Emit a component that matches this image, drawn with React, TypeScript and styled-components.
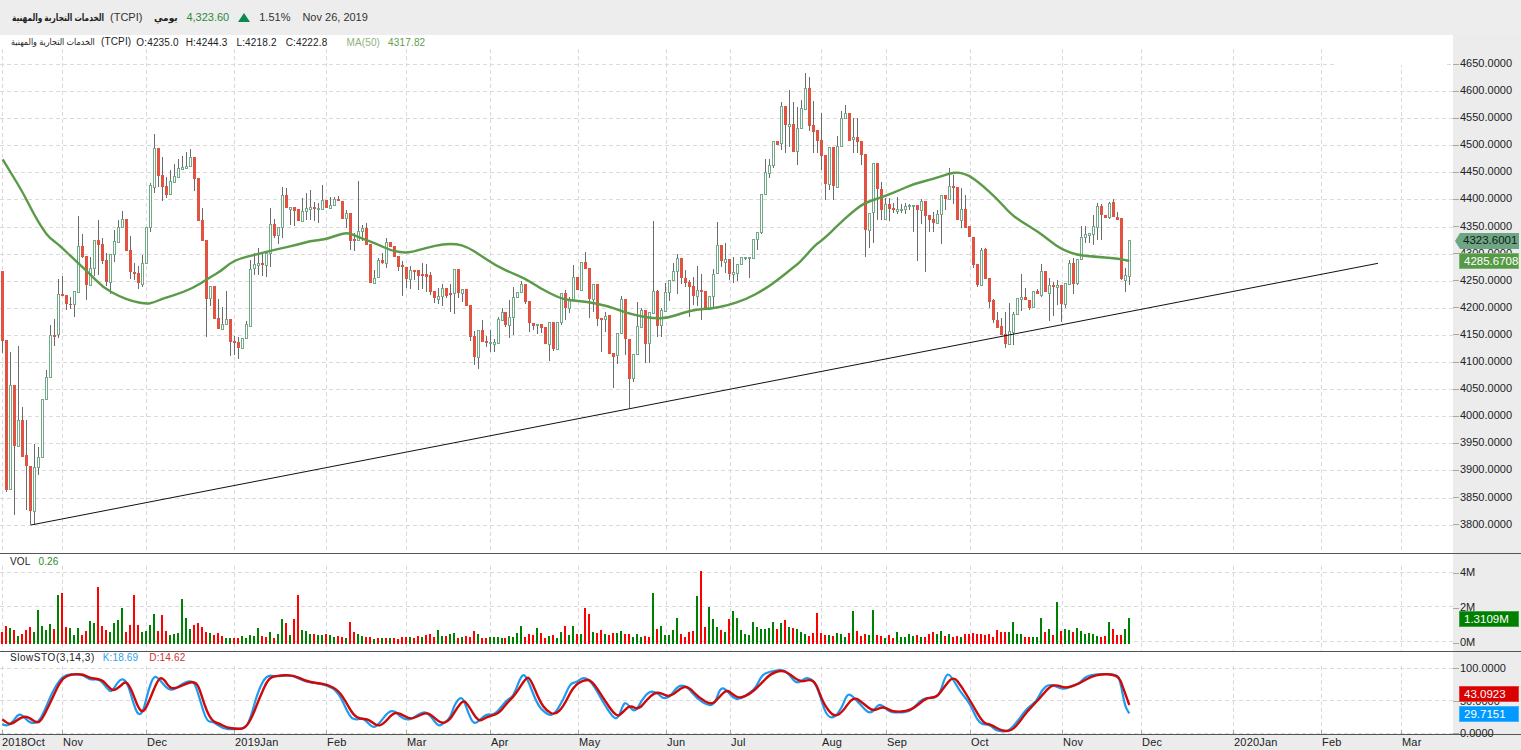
import React from 'react'
import styled, { createGlobalStyle } from 'styled-components'

type Candle = [number, number, number, number, number]

// candle rows: up(1)/down(0), body top, body bottom, wick high, wick low (0 = no wick)
// values were read at 3x, so they get divided on the way in
const candlesA: Candle[] = [
  [0,453,662,0,700],[0,660,1110,0,1115],[1,796,1108,697,0],[0,796,977,0,1185],[1,900,977,678,0],[0,900,1010,862,0],[0,1005,1037,900,1170],[0,1038,1172,0,1215],[1,1042,1172,972,1215],[1,1010,1042,982,1065],
  [1,838,1010,0,0],[1,770,838,750,0],[1,645,770,615,0],[0,645,650,598,678],[1,522,643,477,653],[0,522,527,467,0],[0,525,552,0,570],[0,551,554,530,567],[1,513,553,0,590],[1,378,515,288,0],
  [0,378,410,342,415],[0,407,495,0,540],[1,445,494,410,0],[1,360,445,0,468],[0,360,375,300,465],[0,372,423,353,432],[0,420,485,400,497],[1,403,485,0,523],[1,363,403,330,425],[1,322,365,300,0],
  [1,298,320,273,0],[0,298,392,0,0],[0,390,455,348,478],[0,457,462,430,480],[0,460,490,437,508],[1,430,492,405,500],[1,322,430,0,0],[1,195,322,190,335],[1,85,200,42,220],[0,85,167,0,200],
  [0,165,200,110,242],[0,198,225,170,233],[1,183,222,150,0],[1,168,185,133,0],[1,145,170,118,0],[1,142,148,108,0],[1,137,143,97,0],[1,112,137,87,0],[0,112,177,0,212],[0,175,302,0,0],
  [0,300,362,265,0],[0,360,537,0,650],[1,498,533,0,557],[0,498,597,0,0],[0,595,627,538,0],[1,613,627,560,0],[1,598,613,513,0],[0,598,665,0,707],[0,663,668,648,705],[0,667,683,650,716],
  [1,655,683,0,0],[1,613,653,603,0],[1,447,617,420,0],[1,432,445,400,465],[1,430,434,385,465],[0,430,434,400,468],[1,398,434,0,470],[1,313,400,265,440],[0,313,347,297,355],[1,320,345,0,372],
  [1,226,320,200,353],[0,226,265,203,0],[1,260,268,0,315],[0,260,272,0,318],[0,268,303,0,0],[1,272,302,235,0],[1,265,272,218,300],[1,260,266,210,300],[0,260,266,245,303],[1,265,268,250,308],
  [1,240,268,195,0],[0,240,263,0,0],[1,255,263,232,0],[1,238,255,230,0],[0,238,242,228,0],[0,243,297,0,0],[1,280,293,270,325],[0,280,362,0,390],[0,358,362,340,392],[1,332,360,183,0],
  [1,325,332,315,362],[0,325,375,308,0],[0,373,488,0,0],[1,475,488,450,0],[1,420,472,415,0],[0,420,428,400,432],[1,365,430,355,443],[0,365,380,0,0],[0,378,410,0,0],[0,408,442,0,453],
]

const candlesB: Candle[] = [
  [0,615,622,603,708],[0,622,656,0,685],[1,631,658,618,687],[0,630,635,0,660],[0,630,647,0,690],[0,642,648,610,688],[0,642,651,612,695],[0,645,695,637,705],[0,693,714,0,730],[1,709,716,685,732],
  [1,685,708,672,738],[0,684,708,0,715],[0,700,704,672,757],[1,628,700,0,762],[0,628,698,0,715],[1,688,698,0,727],[0,688,737,0,0],[0,736,830,0,842],[0,828,890,812,915],[1,811,890,0,927],
  [0,811,845,780,0],[0,843,848,828,862],[1,847,849,810,875],[1,847,851,838,875],[1,777,848,770,0],[1,757,780,745,0],[0,757,795,0,800],[1,771,795,720,835],[1,712,772,682,825],[1,697,712,0,0],
  [1,672,697,662,0],[0,672,725,0,732],[0,724,790,0,815],[0,790,797,0,810],[1,793,796,0,823],[0,792,803,0,820],[0,801,851,0,0],[1,787,851,0,903],[0,787,866,0,872],[1,787,866,0,0],
  [1,700,785,0,795],[0,700,743,690,780],[1,720,743,712,760],[1,652,718,615,0],[0,652,690,0,0],[1,606,690,0,0],[0,606,626,577,0],[0,624,716,0,775],[1,673,716,0,757],[0,673,776,0,798],
  [0,775,779,0,875],[1,767,776,755,815],[0,765,882,0,0],[0,880,890,0,985],[1,818,885,0,912],[1,718,818,708,0],[0,717,838,0,885],[0,838,957,0,1045],[1,883,953,0,965],[1,798,883,727,0],
  [1,751,801,745,805],[0,751,852,0,910],[1,757,848,0,908],[1,694,758,483,0],[0,694,797,690,830],[1,751,796,745,830],[1,697,754,670,0],[1,661,697,0,722],[1,634,661,610,0],[1,595,634,582,703],
  [0,595,653,0,673],[0,653,668,630,680],[0,667,680,660,770],[0,677,707,650,735],[1,691,708,618,738],[0,690,695,642,780],[0,693,746,0,0],[1,708,746,0,0],[1,642,708,628,745],[1,556,640,487,0],
  [0,555,602,0,620],[1,598,605,550,640],[0,598,641,0,660],[1,637,641,590,668],[1,613,638,0,662],[1,592,613,0,0],[1,592,594,590,600],[1,592,593,0,654],[1,538,595,0,0],[1,517,538,0,570],
  [1,403,517,0,523],[1,337,403,298,0],[1,316,340,298,353],[1,244,316,0,323],[0,244,255,0,0],[1,138,250,125,270],[0,138,195,0,278],[1,193,197,90,262],[0,193,275,125,0],[1,205,272,142,315],
]

const candlesC: Candle[] = [
  [1,145,205,120,0],[1,85,147,40,0],[0,85,197,52,213],[0,195,215,123,278],[0,210,242,0,278],[0,240,287,160,330],[0,285,371,0,420],[1,262,371,0,390],[0,262,377,0,420],[1,258,380,228,0],
  [1,175,258,152,0],[1,160,175,135,0],[0,160,242,0,0],[1,232,238,175,278],[0,232,245,175,280],[0,243,285,0,315],[0,282,510,0,590],[1,458,510,0,563],[1,310,455,0,548],[0,310,387,0,480],
  [0,388,450,365,480],[1,432,477,415,480],[0,432,447,415,483],[0,445,450,430,460],[1,447,452,412,462],[1,447,449,432,460],[1,438,446,430,462],[1,435,437,432,450],[1,436,438,435,517],[0,436,450,0,602],
  [1,423,450,418,492],[0,423,467,0,635],[0,465,480,0,515],[0,478,489,455,515],[1,462,488,450,0],[1,405,462,0,552],[0,405,417,0,450],[1,378,417,325,0],[0,378,384,345,433],[0,381,480,0,0],
  [1,447,480,385,505],[0,447,503,405,0],[0,498,531,0,0],[0,530,615,0,625],[0,612,676,0,680],[1,570,674,563,0],[0,568,657,565,0],[0,654,726,0,743],[0,720,780,718,790],[0,780,804,757,0],
  [0,797,825,775,0],[0,823,852,755,863],[1,814,852,728,0],[1,762,815,757,855],[1,715,762,0,0],[1,712,717,642,752],[0,711,720,684,0],[0,720,743,0,750],[1,694,740,0,0],[0,693,701,688,0],
  [1,633,704,612,712],[0,633,695,0,0],[1,676,699,655,783],[0,675,681,665,768],[1,675,681,660,735],[0,675,732,0,787],[1,670,731,0,745],[1,610,673,600,0],[0,610,672,595,702],[1,597,668,0,675],
  [1,532,597,498,0],[1,523,532,498,550],[1,520,524,0,550],[1,498,521,465,555],[1,438,500,428,540],[0,438,465,432,540],[0,465,473,0,0],[1,428,472,425,478],[0,426,472,418,0],[0,472,480,455,0],
  [0,474,657,0,660],[1,646,659,625,695],[1,541,647,0,675],
]

// tops of the volume bars at 3x, minus sign = red bar
const volA = [
  -275,-258,264,-270,288,-282,-270,-261,276,210,258,270,252,-267,165,-159,-261,264,285,264,
  -285,-273,243,249,-141,-258,-270,276,249,240,204,-276,-255,-165,-255,275,274,255,222,-273,
  -225,-273,285,282,279,177,234,267,-255,-249,-261,-276,279,-285,-279,-288,294,294,-294,-294,
  288,293,285,288,264,-288,-291,276,-294,282,237,-249,285,-237,-165,270,273,282,-282,285,
  285,-282,285,291,-288,-291,294,-246,-276,282,288,-291,-291,296,-294,294,-294,294,-294,-297,
]
const volB = [
  -261,-261,261,-264,-258,261,-255,-252,-261,240,258,-258,252,249,-264,261,-258,-261,-243,252,
  -264,-264,261,261,261,264,-264,258,261,249,228,-261,-252,-255,234,-249,-264,258,-255,264,
  246,-228,255,228,-252,252,-174,-192,246,-249,-240,252,-255,-249,249,243,-252,-252,261,252,
  261,-258,-261,129,-237,228,255,255,240,204,-252,-261,-246,-243,138,-63,-231,171,207,231,
  -240,246,-207,183,204,240,252,255,216,231,237,237,234,216,-237,219,-210,231,-234,237,
]
const volC = [
  246,252,-258,-249,-189,-249,-255,255,-258,249,252,261,-249,183,-243,-258,-252,255,180,-255,
  -258,264,-255,-264,246,261,261,252,258,-255,261,-261,-252,-246,252,243,-258,252,-261,-258,
  261,-252,-252,-249,-252,-252,-255,-252,-261,-240,-246,-246,246,216,252,252,-261,-261,261,261,
  204,-246,237,-255,156,-243,237,240,-246,234,243,252,249,252,258,-261,-258,216,-237,-255,
  -255,237,204,
]

const maA = [8,118,40,170,70,220,100,280,130,330,150,355,175,373,230,425,270,462,310,503,360,530,400,545,440,552,460,548,490,535,550,517,590,497,610,485,630,472,660,455,690,430,720,415,770,403,810,393,850,383,890,375,930,363,975,358,1000,350,1030,340,1050,340,1085,355,1130,372,1170,390,1200,397]
const maB = [30,578,80,563,130,552,170,552,200,560,240,585,285,615,330,637,375,655,420,685,480,715,510,721,560,725,620,737,660,752,710,767,760,775,800,775,850,758,890,748,930,746,980,737,1040,717,1090,690,1140,655,1180,622,1200,607]
const maC = [165,555,190,538,240,490,270,462,310,430,370,410,420,390,460,372,520,357,570,340,595,337,625,345,660,370,710,415,750,460,780,482,830,512,870,543,905,568,950,585,1000,590,1070,595,1108,603]

const kA = [7,552,20,560,40,545,55,521,70,528,90,550,115,548,135,510,155,460,180,418,200,403,225,403,250,405,270,420,300,417,320,445,335,457,350,430,368,413,385,435,400,490,415,527,430,515,445,450,462,405,480,420,505,450,525,448,545,432,570,422,585,430,600,480,620,545,640,545,670,567,700,568,735,565,750,540,775,450,800,405,830,410,860,405,880,408,915,425,950,430,980,435,1015,455,1050,533,1070,540,1090,533,1120,567,1140,548,1165,515,1185,512]
const kB = [0,500,20,510,40,505,70,483,90,495,115,530,130,520,150,505,165,460,187,436,205,490,222,525,245,505,260,492,285,495,320,450,340,440,365,372,380,380,410,460,435,490,460,498,490,450,510,400,530,397,550,380,575,395,605,450,640,505,655,505,670,462,680,458,705,490,725,450,750,422,775,430,790,447,810,440,835,406,860,408,890,445,925,468,945,460,960,415,975,415,1000,445,1020,448,1050,428,1070,410,1085,375,1110,365,1145,358,1165,370,1185,397]
const kC = [60,397,78,382,100,390,115,420,138,497,162,505,185,475,200,435,212,433,240,462,270,495,295,463,310,467,330,488,380,487,400,475,430,443,465,445,480,430,497,375,510,372,540,425,570,460,597,523,630,523,645,540,670,546,695,538,740,475,770,455,785,420,810,400,850,420,880,405,900,400,915,380,950,372,1010,372,1020,390,1035,470,1048,490]

const dA = [7,538,25,553,40,550,65,530,85,530,110,550,125,540,150,490,180,425,200,407,225,402,250,403,270,415,305,418,325,440,340,453,360,440,378,422,395,450,415,505,430,518,445,490,475,415,490,415,510,445,530,445,560,430,580,425,595,435,615,500,635,543,660,552,680,563,710,567,735,565,755,535,780,470,805,415,830,407,880,405,915,422,950,430,980,433,1015,450,1040,490,1060,525,1080,537,1105,537,1130,558,1150,553,1180,518]
const dB = [0,490,30,508,50,500,80,487,100,500,125,522,150,510,170,475,190,450,205,465,235,517,260,500,295,492,320,460,345,435,378,383,390,383,420,455,440,483,465,495,490,470,520,410,550,390,575,390,610,445,650,503,670,485,690,465,715,480,740,450,765,427,785,430,810,442,850,408,870,415,895,442,935,465,955,445,980,418,1000,435,1020,445,1050,432,1080,405,1110,372,1145,360,1170,372]
const dC = [60,397,90,388,108,400,130,460,160,500,185,490,220,438,250,460,280,485,310,468,340,487,390,482,420,460,440,443,470,442,490,415,520,377,545,410,575,460,610,520,630,522,665,543,695,543,720,515,740,485,775,450,810,408,830,405,860,415,900,400,945,373,1015,373,1030,415,1048,465]

const months = [
  { x: 2, label: '2018Oct' }, { x: 62, label: 'Nov' }, { x: 146, label: 'Dec' }, { x: 234, label: '2019Jan' },
  { x: 326, label: 'Feb' }, { x: 406, label: 'Mar' }, { x: 490, label: 'Apr' }, { x: 578, label: 'May' },
  { x: 666, label: 'Jun' }, { x: 730, label: 'Jul' }, { x: 821, label: 'Aug' }, { x: 886, label: 'Sep' },
  { x: 970, label: 'Oct' }, { x: 1062, label: 'Nov' }, { x: 1141, label: 'Dec' }, { x: 1233, label: '2020Jan' },
  { x: 1321, label: 'Feb' }, { x: 1401, label: 'Mar' },
]

const priceTicks = Array.from({ length: 18 }, (_, i) => `${4650 - i * 50}.0000`)

const barX = (i: number) => Math.round(2 + i * 3.996)

const toPage = (x0: number, y0: number, pts: number[]) => {
  const out: [number, number][] = []
  for (let i = 0; i < pts.length; i += 2) out.push([x0 + pts[i] / 3, y0 + pts[i + 1] / 3])
  return out
}

// midpoint quadratic smoothing, good enough for these lines
const smooth = (p: [number, number][]) => {
  let d = `M${p[0][0].toFixed(1)} ${p[0][1].toFixed(1)}`
  for (let i = 1; i < p.length - 1; i++) {
    const mx = (p[i][0] + p[i + 1][0]) / 2
    const my = (p[i][1] + p[i + 1][1]) / 2
    d += `Q${p[i][0].toFixed(1)} ${p[i][1].toFixed(1)} ${mx.toFixed(1)} ${my.toFixed(1)}`
  }
  const l = p[p.length - 1]
  return `${d}L${l[0].toFixed(1)} ${l[1].toFixed(1)}`
}

const maPath = smooth([...toPage(0, 120, maA), ...toPage(400, 60, maB), ...toPage(760, 60, maC)])
const kPath = smooth([...toPage(0, 540, kA), ...toPage(400, 550, kB), ...toPage(780, 550, kC)])
const dPath = smooth([...toPage(0, 540, dA), ...toPage(400, 550, dB), ...toPage(780, 550, dC)])

const candles = [
  ...candlesA.map(c => ({ c, y0: 120 })),
  ...candlesB.map(c => ({ c, y0: 60 })),
  ...candlesC.map(c => ({ c, y0: 60 })),
]

const volumes = [
  ...volA.map(t => ({ red: t < 0, h: (312 - Math.abs(t)) / 3 })),
  ...volB.map(t => ({ red: t < 0, h: (282 - Math.abs(t)) / 3 })),
  ...volC.map(t => ({ red: t < 0, h: (282 - Math.abs(t)) / 3 })),
]

const GlobalStyle = createGlobalStyle`
  html, body {
    margin: 0;
    padding: 0;
    background: #fff;
    overflow: hidden;
  }
`

const Page = styled.div`
  width: 1521px;
  height: 750px;
  overflow: hidden;
  display: flex;
  flex-direction: column;
  font-family: "Liberation Sans", "DejaVu Sans", sans-serif;
`

const Header = styled.div`
  height: 35px;
  flex: none;
  background: #ededed;
  display: flex;
  align-items: center;
  padding: 0 0 1px 12px;
  box-sizing: border-box;
  font-size: 11px;
  color: #333;
`

const HeaderItem = styled.span<{ $gap: number; $color?: string }>`
  margin-right: ${p => p.$gap}px;
  color: ${p => p.$color || '#333'};
  white-space: nowrap;
`

// the Arabic face we have is wider than the one in the chart, so it gets squeezed to its slot
const Squeezed = styled.span<{ $width: number; $scale: number }>`
  display: inline-block;
  width: ${p => p.$width}px;
  transform: scaleX(${p => p.$scale});
  transform-origin: left center;
  white-space: nowrap;
`

const HeaderArabic = styled(Squeezed)<{ $after?: number }>`
  font-size: 10px;
  font-weight: bold;
  color: #222;
  margin-right: ${p => p.$after ?? 6}px;
`

const UpArrow = styled.svg`
  width: 12px;
  height: 9px;
  margin-right: 9px;
  flex: none;
`

const Pane = styled.div<{ $height: number }>`
  height: ${p => p.$height}px;
  flex: none;
  display: flex;
  position: relative;
  box-sizing: border-box;
  border-bottom: 1px solid #555;
`

const Plot = styled.svg`
  width: 1453px;
  height: 100%;
  flex: none;
  display: block;
`

const Axis = styled.div<{ $offset: number }>`
  flex: 1;
  background: #ececec;
  padding-top: ${p => p.$offset}px;
  position: relative;
  box-sizing: border-box;
`

const Tick = styled.div<{ $step: number }>`
  height: ${p => p.$step}px;
  line-height: ${p => p.$step}px;
  padding-left: 7px;
  font-size: 11px;
  color: #222;
  position: relative;

  &::before {
    content: '';
    position: absolute;
    left: 0;
    top: 50%;
    width: 6px;
    height: 1px;
    background: #9db09a;
  }
`

const Badge = styled.div<{ $top: number; $bg: string; $fg: string }>`
  position: absolute;
  left: 6px;
  right: 2px;
  top: ${p => p.$top}px;
  height: 16px;
  line-height: 15px;
  box-sizing: border-box;
  padding-left: 4px;
  font-size: 11.5px;
  background: ${p => p.$bg};
  color: ${p => p.$fg};
  border: 1px solid rgba(255, 255, 255, 0.25);
`

const ArrowBadge = styled(Badge)`
  left: 2px;
  padding-left: 8px;
  border: none;
  clip-path: polygon(0 50%, 5px 0, 100% 0, 100% 100%, 5px 100%);
`

const Legend = styled.div<{ $top: number; $left?: number }>`
  position: absolute;
  left: ${p => p.$left ?? 10}px;
  top: ${p => p.$top}px;
  display: flex;
  align-items: center;
  font-size: 10px;
  letter-spacing: 0.15px;
  line-height: 13px;
  color: #222;
  white-space: nowrap;
`

const WideLabel = styled.span`
  letter-spacing: 0.55px;
`

const LegendArabic = styled(Squeezed)`
  font-size: 9px;
  letter-spacing: 0;
  margin-right: 6px;
`

const LegendItem = styled.span<{ $gap: number; $color?: string }>`
  margin-left: ${p => p.$gap}px;
  color: ${p => p.$color || '#222'};
`

const TimeAxis = styled.div`
  flex: 1;
  background: #ececec;
  display: flex;
  font-size: 11px;
  line-height: 15px;
  color: #222;
`

const Month = styled.div<{ $width: number; $first?: boolean }>`
  width: ${p => p.$width}px;
  flex: none;
  padding-left: ${p => (p.$first ? 2 : 3)}px;
  box-sizing: border-box;
  letter-spacing: 0.2px;
`

const GridLines: React.FC<{ ys: number[]; top: number; bottom: number }> = ({ ys, top, bottom }) => (
  <g stroke="#dadada" strokeDasharray="4 3" shapeRendering="crispEdges">
    {ys.map(y => (
      <line key={y} x1={0} x2={1453} y1={y} y2={y} />
    ))}
    {months.map(m => (
      <line key={m.x} x1={m.x + 0.5} x2={m.x + 0.5} y1={top} y2={bottom} />
    ))}
  </g>
)

const MainPlot: React.FC = () => {
  const ys = Array.from({ length: 17 }, (_, i) => Math.round(91 + i * 27.1) + 0.5)
  return (
    <Plot viewBox="0 35 1453 518">
      <GridLines ys={ys} top={49} bottom={553} />
      <g stroke="#dadada" strokeDasharray="4 3" shapeRendering="crispEdges">
        <line x1={0} x2={1335} y1={64.5} y2={64.5} />
        <line x1={1447} x2={1453} y1={64.5} y2={64.5} />
      </g>
      {/* the top stretch of the last month line is missing in the chart */}
      <rect x={1400} y={49} width={3} height={16} fill="#fff" />
      <g shapeRendering="crispEdges">
        {candles.map(({ c, y0 }, i) => {
          const [up, top, bot, hi, lo] = c
          const x = barX(i)
          const t = Math.round(y0 + top / 3)
          const b = Math.max(Math.round(y0 + bot / 3), t + 1)
          const h = hi ? Math.round(y0 + hi / 3) : t
          const l = lo ? Math.round(y0 + lo / 3) : b
          return (
            <g key={i}>
              <rect x={x} y={h} width={1} height={l - h} fill="#6b6b6b" />
              {up ? (
                <rect x={x - 0.5} y={t + 0.5} width={2} height={b - t} fill="#fff" stroke="#70a888" />
              ) : (
                <rect x={x - 1} y={t} width={3} height={b - t} fill="#e25241" />
              )}
            </g>
          )
        })}
      </g>
      <path d={maPath} fill="none" stroke="#5a9a48" strokeWidth={2.4} strokeLinejoin="round" />
      <line x1={31} y1={525} x2={1378} y2={263.3} stroke="#111" strokeWidth={1} />
    </Plot>
  )
}

const VolumePlot: React.FC = () => (
  <Plot viewBox="0 554 1453 97">
    <GridLines ys={[572.5, 606.5, 641.5]} top={566} bottom={651} />
    <g shapeRendering="crispEdges">
      {volumes.map((v, i) => (
        <rect key={i} x={barX(i) - 1} y={644 - v.h} width={2} height={v.h} fill={v.red ? '#ff0000' : '#008000'} />
      ))}
    </g>
  </Plot>
)

const StochPlot: React.FC = () => (
  <Plot viewBox="0 652 1453 82">
    <GridLines ys={[668.5, 700.5, 733.5]} top={666} bottom={734} />
    <g stroke="#9db09a" shapeRendering="crispEdges">
      {months.map(m => (
        <line key={m.x} x1={m.x + 0.5} x2={m.x + 0.5} y1={730} y2={734} />
      ))}
    </g>
    <path d={kPath} fill="none" stroke="#1e9bf0" strokeWidth={2.2} strokeLinejoin="round" />
    <path d={dPath} fill="none" stroke="#cc0a0a" strokeWidth={2.4} strokeLinejoin="round" />
  </Plot>
)

const App: React.FC = () => (
  <Page>
    <GlobalStyle />
    <Header>
      <HeaderItem $gap={12}>
        <HeaderArabic $width={92} $scale={0.74}>الخدمات التجارية والمهنية</HeaderArabic>
        (TCPI)
      </HeaderItem>
      <HeaderItem $gap={13}>
        <HeaderArabic $width={19} $scale={0.9} $after={0}>يومي</HeaderArabic>
      </HeaderItem>
      <HeaderItem $gap={9} $color="#2a8a3a">4,323.60</HeaderItem>
      <UpArrow viewBox="0 0 12 9">
        <path d="M6 0L12 9H0Z" fill="#0a8a4c" />
      </UpArrow>
      <HeaderItem $gap={12}>1.51%</HeaderItem>
      <HeaderItem $gap={0}>Nov 26, 2019</HeaderItem>
    </Header>

    <Pane $height={519}>
      <MainPlot />
      <Axis $offset={15}>
        {priceTicks.map(t => (
          <Tick key={t} $step={27.1}>{t}</Tick>
        ))}
        <ArrowBadge $top={198} $bg="#6ea583" $fg="#10201a">4323.6001</ArrowBadge>
        <Badge $top={218} $bg="#559b46" $fg="#fff">4285.6708</Badge>
      </Axis>
      <Legend $top={0} $left={11}>
        <span>
          <LegendArabic $width={84} $scale={0.89}>الخدمات التجارية والمهنية</LegendArabic>
          (TCPI)
        </span>
        <LegendItem $gap={5}>O:4235.0</LegendItem>
        <LegendItem $gap={7}>H:4244.3</LegendItem>
        <LegendItem $gap={9}>L:4218.2</LegendItem>
        <LegendItem $gap={9}>C:4222.8</LegendItem>
        <LegendItem $gap={19} $color="#8fb07a">MA(50)</LegendItem>
        <LegendItem $gap={8} $color="#5f9c4c">4317.82</LegendItem>
      </Legend>
    </Pane>

    <Pane $height={98}>
      <VolumePlot />
      <Axis $offset={1}>
        {['4M', '2M', '0M'].map(t => (
          <Tick key={t} $step={35}>{t}</Tick>
        ))}
        <Badge $top={57} $bg="#008000" $fg="#fff">1.3109M</Badge>
      </Axis>
      <Legend $top={1}>
        <span>VOL</span>
        <LegendItem $gap={8} $color="#2a8a2a">0.26</LegendItem>
      </Legend>
    </Pane>

    <Pane $height={83}>
      <StochPlot />
      <Axis $offset={0}>
        {['100.0000', '50.0000', '0.0000'].map(t => (
          <Tick key={t} $step={32.5}>{t}</Tick>
        ))}
        <Badge $top={34} $bg="#d90000" $fg="#fff">43.0923</Badge>
        <Badge $top={54} $bg="#0099ff" $fg="#fff">29.7151</Badge>
      </Axis>
      <Legend $top={-1}>
        <WideLabel>SlowSTO(3,14,3)</WideLabel>
        <LegendItem $gap={8} $color="#2f9fe8">K:18.69</LegendItem>
        <LegendItem $gap={11} $color="#d03030">D:14.62</LegendItem>
      </Legend>
    </Pane>

    <TimeAxis>
      {months.map((m, i) => (
        <Month key={m.x} $first={i === 0} $width={(months[i + 1]?.x ?? 1521) - m.x}>{m.label}</Month>
      ))}
    </TimeAxis>
  </Page>
)

export default App
